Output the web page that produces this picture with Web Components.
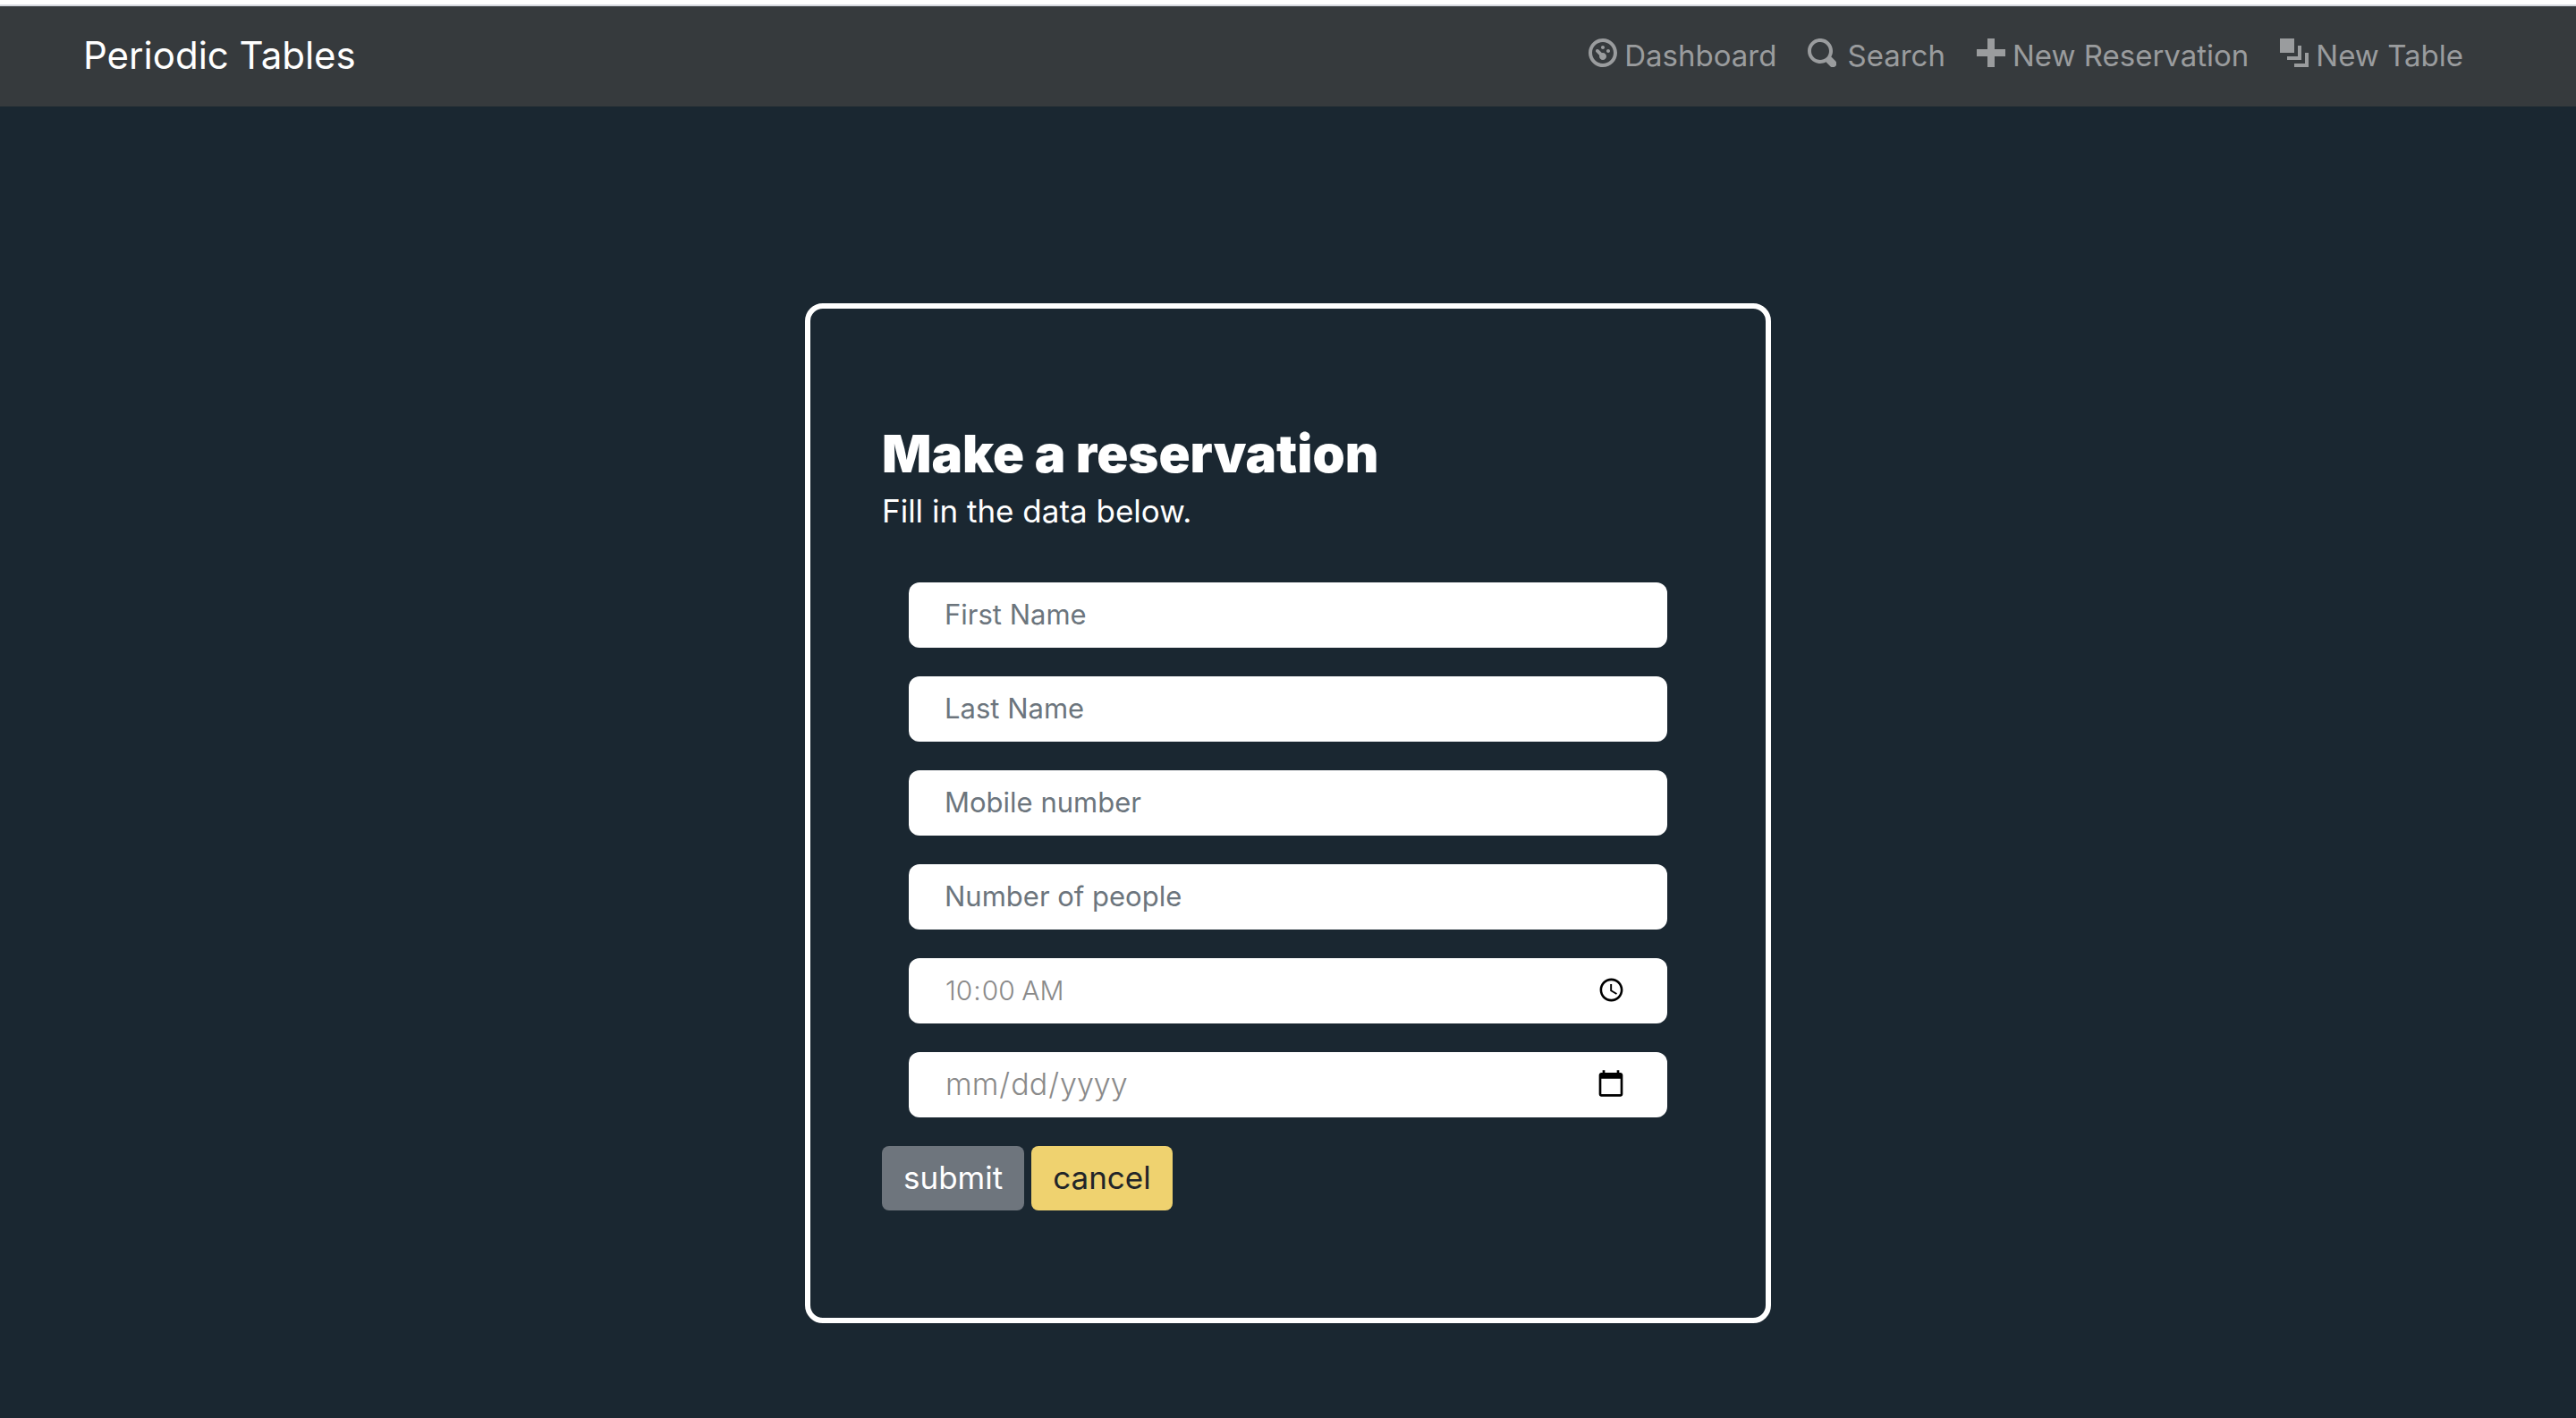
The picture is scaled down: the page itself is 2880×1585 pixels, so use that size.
<!DOCTYPE html>
<html lang="en">
<head>
<meta charset="utf-8">
<title>Periodic Tables</title>
<style>
  html { background: #1a2731; }
  body {
    margin: 0;
    min-height: 100vh;
    box-sizing: border-box;
    border-top: 5px solid #fff;
    background: #1a2731;
    color: #fff;
    font-family: Inter, "Open Sans", sans-serif;
    font-size: 32px;
    line-height: 48px;
  }
</style>
</head>
<body>
<nav-bar>
  <a slot="brand" href="#home">Periodic Tables</a>
  <nav-item icon="dashboard" href="#dashboard">Dashboard</nav-item>
  <nav-item icon="search" href="#search">Search</nav-item>
  <nav-item icon="plus" href="#reservations-new">New Reservation</nav-item>
  <nav-item icon="layers" href="#tables-new">New Table</nav-item>
</nav-bar>
<main>
  <reservation-card>
    <span slot="title">Make a reservation</span>
    <span slot="subtitle">Fill in the data below.</span>
    <form-field label="First Name" name="first_name"></form-field>
    <form-field label="Last Name" name="last_name"></form-field>
    <form-field label="Mobile number" name="mobile_number" type="tel"></form-field>
    <form-field label="Number of people" name="people" type="number"></form-field>
    <form-field label="Reservation time" name="reservation_time" type="time" value="10:00"></form-field>
    <form-field label="Reservation date" name="reservation_date" type="date"></form-field>
    <form-button slot="actions" variant="secondary">submit</form-button>
    <form-button slot="actions" variant="warning">cancel</form-button>
  </reservation-card>
</main>
<script>
const ICONS = {
  dashboard: 'M4 0c-2.2 0-4 1.8-4 4s1.8 4 4 4 4-1.8 4-4-1.8-4-4-4zm0 1c1.66 0 3 1.34 3 3s-1.34 3-3 3-3-1.34-3-3 1.34-3 3-3zm0 1c-.28 0-.5.22-.5.5s.22.5.5.5.5-.22.5-.5-.22-.5-.5-.5zm-1.66 1a.5.5 0 0 0-.19.84l.91.91c-.02.08-.06.16-.06.25 0 .55.45 1 1 1s1-.45 1-1-.45-1-1-1c-.09 0-.17.04-.25.06l-.91-.91a.5.5 0 0 0-.44-.16.5.5 0 0 0-.06 0zm3.16 0c-.28 0-.5.22-.5.5s.22.5.5.5.5-.22.5-.5-.22-.5-.5-.5z',
  search: 'M3.5 0c-1.93 0-3.5 1.57-3.5 3.5s1.57 3.5 3.5 3.5c.59 0 1.17-.14 1.66-.41a1 1 0 0 0 .13.13l1 1a1.02 1.02 0 1 0 1.44-1.44l-1-1a1 1 0 0 0-.16-.13c.27-.49.44-1.06.44-1.66 0-1.93-1.55-3.5-3.5-3.5zm0 1c1.39 0 2.5 1.11 2.5 2.5 0 .66-.24 1.27-.66 1.72l-.03.03a1 1 0 0 0-.13.13c-.44.4-1.04.63-1.69.63-1.39 0-2.5-1.11-2.5-2.5s1.11-2.5 2.5-2.5z',
  plus: 'M3 0v3h-3v2h3v3h2v-3h3v-2h-3v-3h-2z',
  layers: 'M0 0v4h4v-4h-4zm5 2v3h-3v1h4v-4h-1zm2 2v3h-3v1h4v-4h-1z'
};

class NavBar extends HTMLElement {
  constructor() {
    super();
    this.attachShadow({ mode: 'open' }).innerHTML = `
      <style>
        :host { display: block; }
        nav {
          display: flex;
          justify-content: space-between;
          align-items: center;
          box-sizing: border-box;
          min-height: 114px;
          padding: 0 126px 2px 93px;
          border-top: 2px solid #d5d8de;
          background: #363a3d;
        }
        ::slotted([slot="brand"]) {
          color: #fff;
          font-size: 42px;
          line-height: 60px;
          text-decoration: none;
        }
        .links { display: flex; gap: 35px; }
      </style>
      <nav aria-label="Main">
        <slot name="brand"></slot>
        <div class="links"><slot></slot></div>
      </nav>`;
  }
}

class NavItem extends HTMLElement {
  connectedCallback() {
    this.attachShadow({ mode: 'open' }).innerHTML = `
      <style>
        :host { display: block; }
        a {
          display: flex;
          gap: 8px;
          color: #9a9c9e;
          font-size: 33px;
          line-height: 48px;
          text-decoration: none;
        }
        svg { width: 32px; height: 32px; margin-top: 5px; fill: currentColor; }
        :host([icon="search"]) a { gap: 12px; }
      </style>
      <a href="${this.getAttribute('href')}">
        <svg viewBox="0 0 8 8" aria-hidden="true"><path d="${ICONS[this.getAttribute('icon')]}"/></svg>
        <span><slot></slot></span>
      </a>`;
  }
}

class ReservationCard extends HTMLElement {
  constructor() {
    super();
    this.attachShadow({ mode: 'open' }).innerHTML = `
      <style>
        :host {
          display: block;
          box-sizing: border-box;
          width: 37.5%;
          margin: 220px auto 106px;
          padding: 128px 80px 120px;
          border: 6px solid #fff;
          border-radius: 20px;
        }
        h1 { margin: 0; font-size: 58px; line-height: 68px; font-weight: 900; }
        p { margin: 0; font-size: 35px; line-height: 60px; }
        .fields { display: grid; gap: 32px; padding: 50px 30px 32px; }
        .actions { display: flex; gap: 8px; }
      </style>
      <form>
        <h1><slot name="title"></slot></h1>
        <p><slot name="subtitle"></slot></p>
        <div class="fields"><slot></slot></div>
        <div class="actions"><slot name="actions"></slot></div>
      </form>`;
  }
}

class FormField extends HTMLElement {
  connectedCallback() {
    const get = (name) => this.getAttribute(name) || '';
    this.attachShadow({ mode: 'open' }).innerHTML = `
      <style>
        :host { display: block; }
        input {
          display: block;
          box-sizing: border-box;
          width: 100%;
          height: 73px;
          margin: 0;
          padding: 0 44px 2px 40px;
          border: 0;
          border-radius: 12px;
          background: #fff;
          color: #8a8a8a;
          font-family: inherit;
          font-size: 31px;
        }
        input::placeholder { color: #6c757d; opacity: 1; }
        input[type="number"] { appearance: textfield; }
        input[type="time"] { font-size: 30px; font-weight: 300; }
        input[type="date"] { font-size: 34px; font-weight: 300; }
      </style>
      <input id="field" type="${get('type') || 'text'}" name="${get('name')}"
             placeholder="${get('label')}" aria-label="${get('label')}" value="${get('value')}">`;
  }
}

class FormButton extends HTMLElement {
  constructor() {
    super();
    this.attachShadow({ mode: 'open' }).innerHTML = `
      <style>
        :host { display: block; }
        button {
          display: block;
          height: 72px;
          margin: 0;
          padding: 0 24px 2px;
          border: 0;
          border-radius: 8px;
          background: #6e757d;
          color: #fff;
          font-family: inherit;
          font-size: 35px;
          line-height: 48px;
        }
        :host([variant="warning"]) button { background: #efd26f; color: #212529; }
      </style>
      <button type="button"><slot></slot></button>`;
  }
}

customElements.define('nav-bar', NavBar);
customElements.define('nav-item', NavItem);
customElements.define('reservation-card', ReservationCard);
customElements.define('form-field', FormField);
customElements.define('form-button', FormButton);
</script>
</body>
</html>
